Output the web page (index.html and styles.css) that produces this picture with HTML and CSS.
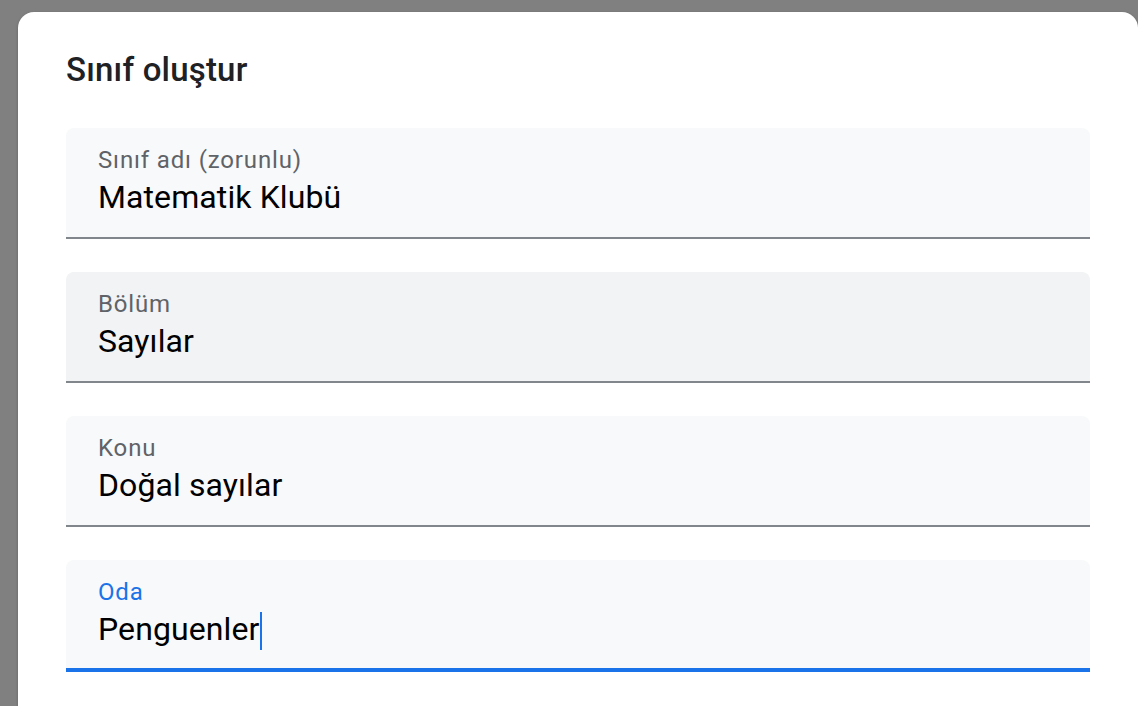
FILE: index.html
```html
<!DOCTYPE html>
<html lang="tr">
<head>
<meta charset="utf-8">
<title>Sınıf oluştur</title>
<link rel="stylesheet" href="styles.css">
</head>
<body>
<div class="dialog">
  <h1 class="title">Sınıf oluştur</h1>
  <div class="fields">
    <div class="field">
      <div class="label">Sınıf adı (zorunlu)</div>
      <div class="value">Matematik Klubü</div>
    </div>
    <div class="field field-hover">
      <div class="label">Bölüm</div>
      <div class="value">Sayılar</div>
    </div>
    <div class="field">
      <div class="label">Konu</div>
      <div class="value">Doğal sayılar</div>
    </div>
    <div class="field field-focus">
      <div class="label">Oda</div>
      <div class="value">Penguenler<span class="caret"></span></div>
    </div>
  </div>
</div>
</body>
</html>
```

FILE: styles.css
```css
html, body {
  margin: 0;
  padding: 0;
  height: 100%;
  overflow: hidden;
}
body {
  background: #808080;
  font-family: Roboto, "Liberation Sans", sans-serif;
}
.dialog {
  margin: 12px 0 0 18px;
  width: 1120px;
  height: 694px;
  box-sizing: border-box;
  padding: 38px 48px 0;
  background: #ffffff;
  border-radius: 16px 16px 0 0;
  box-shadow: 0 1px 3px rgba(0, 0, 0, 0.25);
}
.title {
  margin: 0 0 38px;
  font-size: 33px;
  line-height: 40px;
  font-weight: 500;
  color: #202124;
  letter-spacing: 0.2px;
}
.fields {
  display: flex;
  flex-direction: column;
  gap: 33px;
}
.field {
  height: 111px;
  box-sizing: border-box;
  padding: 18px 32px 0;
  background: #f8f9fa;
  border-bottom: 2px solid #80868b;
  border-radius: 8px 8px 0 0;
}
.field-hover {
  background: #f1f3f4;
}
.field-focus {
  height: 112px;
  border-bottom: 4px solid #1a73e8;
}
.label {
  font-size: 24px;
  line-height: 28px;
  letter-spacing: 0.85px;
  color: #5f6368;
}
.field-focus .label {
  color: #1a73e8;
}
.value {
  margin-top: 3px;
  font-size: 32px;
  line-height: 40px;
  letter-spacing: 0.1px;
  color: #000000;
}
.caret {
  display: inline-block;
  width: 2px;
  height: 38px;
  margin-left: 1px;
  vertical-align: -10px;
  background: #1a73e8;
}
```
